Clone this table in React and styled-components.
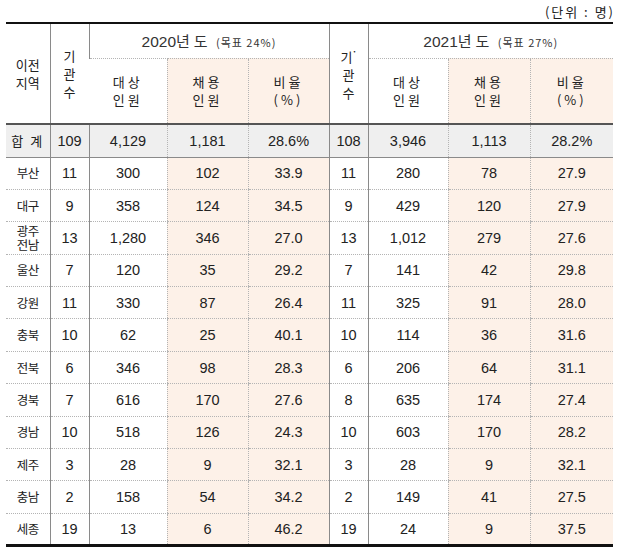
import React from 'react';
import styled, { createGlobalStyle } from 'styled-components';

const GlobalStyle = createGlobalStyle`
  html, body {
    margin: 0;
    padding: 0;
    background: #ffffff;
  }
  body {
    font-family: "Liberation Sans", "Noto Sans CJK KR", Arial, sans-serif;
    color: #1e1e1e;
  }
`;

const Page = styled.div`
  width: 620px;
  padding: 4px 7px 0 6px;
  box-sizing: border-box;
`;

const Unit = styled.div`
  text-align: right;
  font-family: "Noto Sans CJK KR", sans-serif;
  font-size: 13px;
  letter-spacing: 2px;
  line-height: 16px;
  height: 18px;
  color: #222;
  margin-right: -2px;
`;

const Table = styled.table`
  width: 607px;
  border-collapse: collapse;
  table-layout: fixed;
  border-top: 2px solid #111;
  border-bottom: 3px solid #111;
`;

const fills = {
  peach: '#fdf1e8',
  gray: '#efefef',
  white: '#ffffff',
};

const Cell = styled.td`
  padding: 0;
  text-align: center;
  vertical-align: middle;
  background: ${p => fills[p.$fill || 'white']};
  border-top: 1px dotted #b4b4b4;
  border-bottom: 1px dotted #b4b4b4;
  border-left: 1px ${p => (p.$solid ? 'solid #8a8a8a' : 'dotted #b4b4b4')};
  &:first-child {
    border-left: none;
  }
  font-size: 14.5px;
  color: #222;
`;

const HeadCell = styled(Cell).attrs({ as: 'th' })`
  font-weight: normal;
  font-family: "Noto Sans CJK KR", sans-serif;
  font-size: 13px;
  line-height: 18px;
  letter-spacing: 3px;
  color: #222;
`;

const YearCell = styled(HeadCell)`
  font-family: "Liberation Sans", "Noto Sans CJK KR", sans-serif;
  font-size: 15.5px;
  letter-spacing: 0;
  padding-top: 2px;
  color: #333;
`;

const YearWord = styled.span`
  font-family: "Noto Sans CJK KR", sans-serif;
  font-size: 15px;
  letter-spacing: 4px;
`;

const Goal = styled.span`
  font-family: "Noto Sans CJK KR", sans-serif;
  font-size: 11px;
  letter-spacing: 1px;
  color: #333;
`;

const Tick = styled.sup`
  font-size: 8px;
  letter-spacing: 0;
  position: relative;
  top: -2px;
`;

const HeadRow = styled.tr`
  height: ${p => p.$h}px;
`;

const TotalRow = styled.tr`
  height: 33px;
  border-top: 2px solid #555;
  & > td {
    border-bottom: 1px solid #8a8a8a;
  }
`;

const Row = styled.tr`
  height: 32.4px;
  & > td:first-child {
    font-family: "Noto Sans CJK KR", sans-serif;
    font-size: 12.5px;
    line-height: 14px;
    letter-spacing: -0.5px;
  }
`;

const TotalLabel = styled.span`
  font-family: "Noto Sans CJK KR", sans-serif;
  font-size: 13px;
  letter-spacing: 2px;
`;

const rows = [
  ['부산', 11, '300', '102', '33.9', 11, '280', '78', '27.9'],
  ['대구', 9, '358', '124', '34.5', 9, '429', '120', '27.9'],
  ['광주\n전남', 13, '1,280', '346', '27.0', 13, '1,012', '279', '27.6'],
  ['울산', 7, '120', '35', '29.2', 7, '141', '42', '29.8'],
  ['강원', 11, '330', '87', '26.4', 11, '325', '91', '28.0'],
  ['충북', 10, '62', '25', '40.1', 10, '114', '36', '31.6'],
  ['전북', 6, '346', '98', '28.3', 6, '206', '64', '31.1'],
  ['경북', 7, '616', '170', '27.6', 8, '635', '174', '27.4'],
  ['경남', 10, '518', '126', '24.3', 10, '603', '170', '28.2'],
  ['제주', 3, '28', '9', '32.1', 3, '28', '9', '32.1'],
  ['충남', 2, '158', '54', '34.2', 2, '149', '41', '27.5'],
  ['세종', 19, '13', '6', '46.2', 19, '24', '9', '37.5'],
];

const widths = [44, 39, 78, 81, 81, 39, 80, 82, 83];
const solidCols = [1, 2, 5, 6];
const peachCols = [3, 4, 7, 8];

const Lines = ({ text }) =>
  text.split('\n').map((t, i) => (
    <React.Fragment key={i}>
      {i > 0 && <br />}
      {t}
    </React.Fragment>
  ));

export default function App() {
  return (
    <Page>
      <GlobalStyle />
      <Unit>(단위 : 명)</Unit>
      <Table>
        <colgroup>
          {widths.map((w, i) => (
            <col key={i} style={{ width: w }} />
          ))}
        </colgroup>
        <thead>
          <HeadRow $h={35}>
            <HeadCell rowSpan={2} style={{ letterSpacing: 0 }}>
              이전<br />지역
            </HeadCell>
            <HeadCell rowSpan={2} $solid style={{ letterSpacing: 0 }}>
              기<br />관<br />수
            </HeadCell>
            <YearCell colSpan={3} $solid>
              2020<YearWord>년도</YearWord> <Goal>(목표 24%)</Goal>
            </YearCell>
            <HeadCell rowSpan={2} $solid style={{ letterSpacing: 0 }}>
              기<Tick>˙</Tick><br />관<br />수
            </HeadCell>
            <YearCell colSpan={3} $solid>
              2021<YearWord>년도</YearWord> <Goal>(목표 27%)</Goal>
            </YearCell>
          </HeadRow>
          <HeadRow $h={66}>
            <HeadCell $solid>대상<br />인원</HeadCell>
            <HeadCell $fill="peach">채용<br />인원</HeadCell>
            <HeadCell $fill="peach">비율<br />(%)</HeadCell>
            <HeadCell $solid>대상<br />인원</HeadCell>
            <HeadCell $fill="peach">채용<br />인원</HeadCell>
            <HeadCell $fill="peach">비율<br />(%)</HeadCell>
          </HeadRow>
        </thead>
        <tbody>
          <TotalRow>
            <Cell $fill="gray"><TotalLabel>합 계</TotalLabel></Cell>
            <Cell $fill="gray" $solid>109</Cell>
            <Cell $fill="gray" $solid>4,129</Cell>
            <Cell $fill="gray">1,181</Cell>
            <Cell $fill="gray">28.6%</Cell>
            <Cell $fill="gray" $solid>108</Cell>
            <Cell $fill="gray" $solid>3,946</Cell>
            <Cell $fill="gray">1,113</Cell>
            <Cell $fill="gray">28.2%</Cell>
          </TotalRow>
          {rows.map((r, ri) => (
            <Row key={ri}>
              {r.map((v, ci) => (
                <Cell
                  key={ci}
                  $solid={solidCols.includes(ci)}
                  $fill={peachCols.includes(ci) ? 'peach' : 'white'}
                >
                  {ci === 0 ? <Lines text={v} /> : v}
                </Cell>
              ))}
            </Row>
          ))}
        </tbody>
      </Table>
    </Page>
  );
}
